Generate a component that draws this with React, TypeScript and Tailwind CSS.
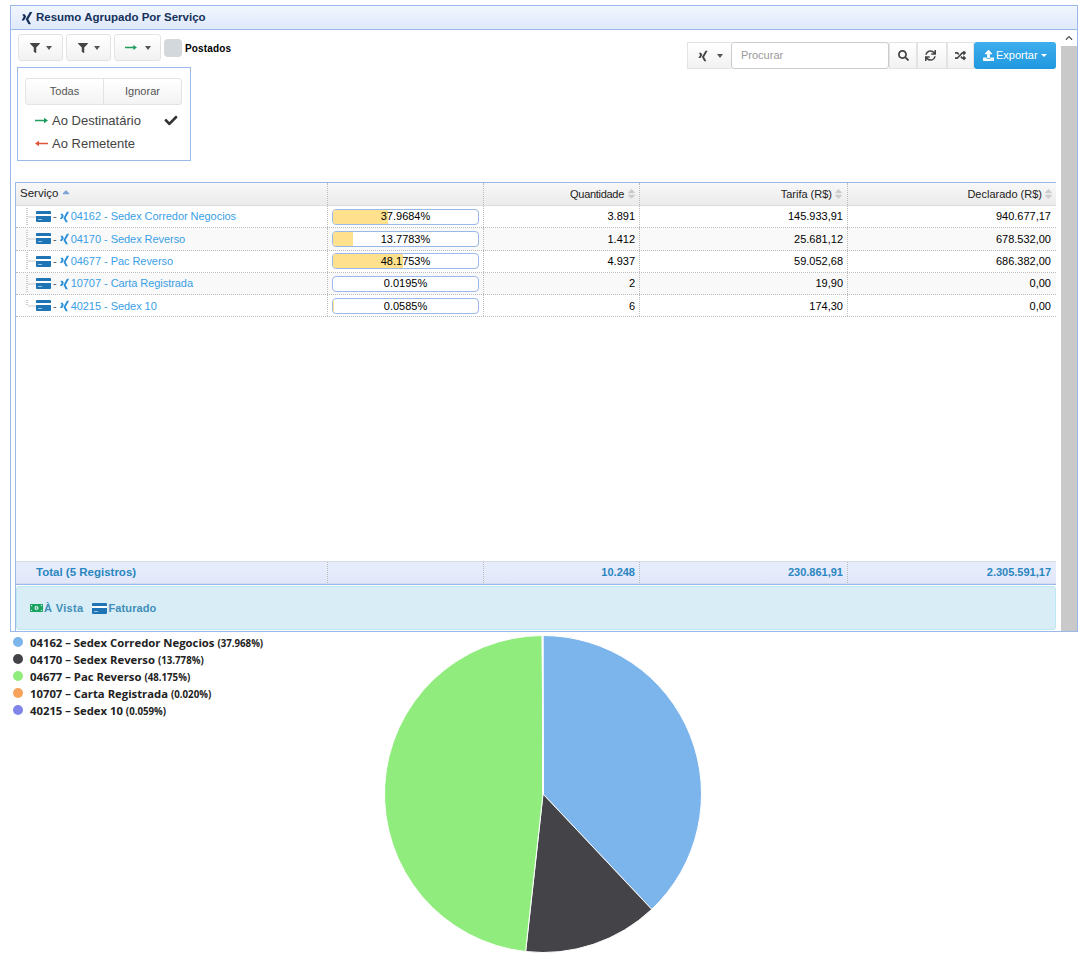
import { FaXing, FaFilter, FaCheck, FaSearch, FaSync, FaRandom, FaUpload, FaMoneyBillAlt, FaSort, FaSortUp, FaChevronUp } from "react-icons/fa";

const rows = [
  { name: "04162 - Sedex Corredor Negocios", pct: 37.9684, qty: "3.891", tarifa: "145.933,91", declarado: "940.677,17" },
  { name: "04170 - Sedex Reverso", pct: 13.7783, qty: "1.412", tarifa: "25.681,12", declarado: "678.532,00" },
  { name: "04677 - Pac Reverso", pct: 48.1753, qty: "4.937", tarifa: "59.052,68", declarado: "686.382,00" },
  { name: "10707 - Carta Registrada", pct: 0.0195, qty: "2", tarifa: "19,90", declarado: "0,00" },
  { name: "40215 - Sedex 10", pct: 0.0585, qty: "6", tarifa: "174,30", declarado: "0,00" },
];

const legend = [
  { label: "04162 – Sedex Corredor Negocios", pct: "37.968%", value: 37.9684, color: "#7cb5ec" },
  { label: "04170 – Sedex Reverso", pct: "13.778%", value: 13.7783, color: "#434348" },
  { label: "04677 – Pac Reverso", pct: "48.175%", value: 48.1753, color: "#90ed7d" },
  { label: "10707 – Carta Registrada", pct: "0.020%", value: 0.0195, color: "#f7a35c" },
  { label: "40215 – Sedex 10", pct: "0.059%", value: 0.0585, color: "#8085e9" },
];

const grid = "grid grid-cols-[312px_156px_156px_208px_1fr]";

function Card({ className = "" }: { className?: string }) {
  return (
    <svg viewBox="0 0 15 11" className={`w-[15px] h-[11px] shrink-0 ${className}`}>
      <rect x="0" y="0" width="15" height="11" rx="1" fill="#1f74b5" />
      <rect x="0" y="3" width="15" height="2" fill="#fff" />
      <rect x="2" y="8" width="4" height="1" fill="#9cc5e4" />
    </svg>
  );
}

function Arrow({ left, className = "" }: { left?: boolean; className?: string }) {
  return (
    <svg viewBox="0 0 13 7" className={`shrink-0 ${className}`}>
      <path d={left ? "M13 2.8H4V0.8L0 3.5l4 2.7V4.2h9z" : "M0 2.8h9V0.8l4 2.7-4 2.7V4.2H0z"} fill="currentColor" />
    </svg>
  );
}

function Caret() {
  return <span className="inline-block w-0 h-0 border-x-[3.5px] border-x-transparent border-t-[4px] border-t-[#555]" />;
}

function TreeLine({ last }: { last: boolean }) {
  return (
    <svg width="16" height="22" className="shrink-0">
      <line x1="7" y1={last ? 5 : 2} x2="7" y2={last ? 11 : 20} stroke="#ccc" strokeWidth="2" strokeDasharray="1 1" />
      <line x1="8" y1="11" x2="16" y2="11" stroke="#ccc" />
    </svg>
  );
}

function Pie() {
  const r = 158.5;
  const c = 159;
  let start = 0;
  const slices = legend.map((s) => {
    const a0 = (start / 100) * Math.PI * 2;
    start += s.value;
    const a1 = (start / 100) * Math.PI * 2;
    const large = a1 - a0 > Math.PI ? 1 : 0;
    const d = `M${c} ${c}L${c + r * Math.sin(a0)} ${c - r * Math.cos(a0)}A${r} ${r} 0 ${large} 1 ${c + r * Math.sin(a1)} ${c - r * Math.cos(a1)}Z`;
    return <path key={s.label} d={d} fill={s.color} stroke="#fff" strokeWidth="1" />;
  });
  return (
    <svg width="318" height="318" className="shrink-0">
      {slices}
    </svg>
  );
}

const toolBtn = "h-[27px] flex items-center justify-center border border-[#e3e3e3] bg-gradient-to-b from-white to-[#f2f2f2] text-[#444]";

export default function App() {
  return (
    <div className="w-[1085px] h-[961px] overflow-hidden bg-white text-[11px] text-black" style={{ fontFamily: '"Liberation Sans", Arial, sans-serif' }}>
      <div className="pt-[5px] pl-[10px]">
        <div className="w-[1068px] h-[627px] border border-[#9ab8e8] flex flex-col">
          <div className="h-[24px] shrink-0 flex items-center gap-[2px] pl-[9px] border-b border-[#9ab8e8] bg-gradient-to-b from-[#f1f6fe] to-[#dfe9fb] text-[#15315a] text-[11.5px] font-bold">
            <FaXing className="w-[14px] h-[14px] text-[#15315a]" />
            <span>Resumo Agrupado Por Serviço</span>
          </div>
          <div className="flex flex-1 min-h-0">
            <div className="w-[1050px] pl-[4px] flex flex-col">
              <div className="relative h-[152px] shrink-0">
                <div className="flex items-start justify-between pl-[3px] pr-[5px]">
                  <div className="flex items-center gap-[3px] pt-[4px]">
                    <button className={`${toolBtn} w-[45px] gap-[6px] rounded-[3px]`}><FaFilter className="w-[10px] h-[10px]" /><Caret /></button>
                    <button className={`${toolBtn} w-[45px] gap-[6px] rounded-[3px]`}><FaFilter className="w-[10px] h-[10px]" /><Caret /></button>
                    <button className={`${toolBtn} w-[47px] gap-[8px] rounded-[3px]`}><Arrow className="w-[12px] h-[7px] text-[#1e9e5c]" /><Caret /></button>
                    <span className="w-[18px] h-[18px] rounded-[4px] bg-[#d3d8dc]" />
                    <span className="text-[10px] font-bold tracking-[0.15px] mt-[2px]">Postados</span>
                  </div>
                  <div className="flex items-center pt-[12px]">
                    <button className={`${toolBtn} w-[44px] gap-[8px] border-r-0`}><FaXing className="w-[12px] h-[12px]" /><Caret /></button>
                    <div className="w-[158px] h-[27px] border border-[#ccc] rounded-[3px] flex items-center pl-[9px] text-[#999]">Procurar</div>
                    <button className={`${toolBtn} w-[28px]`}><FaSearch className="w-[11px] h-[11px]" /></button>
                    <button className={`${toolBtn} w-[30px] pr-[3px]`}><FaSync className="w-[11px] h-[11px]" /></button>
                    <button className={`${toolBtn} w-[27px]`}><FaRandom className="w-[11px] h-[11px]" /></button>
                    <button className="h-[27px] w-[82px] flex items-center pl-[9px] gap-[2px] rounded-[3px] bg-gradient-to-b from-[#3eaeec] to-[#1e98e0] text-white">
                      <FaUpload className="w-[11px] h-[11px]" />
                      Exportar
                      <span className="ml-[1px] inline-block w-0 h-0 border-x-[3px] border-x-transparent border-t-[3px] border-t-white" />
                    </button>
                  </div>
                </div>
                <div className="absolute left-[2px] top-[37px] w-[174px] h-[94px] border border-[#9ab8e8] bg-white px-[7px] pt-[10px]">
                  <div className="flex h-[27px] w-[157px] border border-[#e3e3e3] rounded-[3px] bg-gradient-to-b from-white to-[#f3f3f3] text-[#555]">
                    <div className="w-[78px] flex items-center justify-center border-r border-[#e3e3e3]">Todas</div>
                    <div className="flex-1 flex items-center justify-center">Ignorar</div>
                  </div>
                  <div className="mt-[4px] h-[23px] flex items-center pl-[10px] gap-[4px] text-[#444] text-[13px]">
                    <Arrow className="w-[13px] h-[7px] text-[#1e9e5c]" />
                    <span>Ao Destinatário</span>
                    <FaCheck className="w-[14px] h-[13px] ml-[19px] text-[#333]" />
                  </div>
                  <div className="h-[23px] flex items-center pl-[10px] gap-[4px] text-[#444] text-[13px]">
                    <Arrow left className="w-[13px] h-[7px] text-[#e2553d]" />
                    <span>Ao Remetente</span>
                  </div>
                </div>
              </div>

              <div className="w-[1041px] flex-1 min-h-0 border-l border-t border-[#9ab8e8] flex flex-col">
                <div className={`${grid} h-[23px] shrink-0 bg-gradient-to-b from-[#f8f8f8] to-[#ebebeb] border-b border-[#dcdcdc] text-[#222]`}>
                  <div className="flex items-center gap-[3px] pl-[4px] border-r border-dotted border-[#bbb] text-[11.5px]">Serviço <FaSortUp className="w-[10px] h-[12px] mt-[1px] text-[#7fa6d6]" /></div>
                  <div className="border-r border-dotted border-[#bbb]" />
                  <div className="flex items-center justify-end gap-[3px] pr-[3px] border-r border-dotted border-[#bbb] tracking-[-0.3px]">Quantidade <FaSort className="w-[9px] h-[12px] text-[#ccc]" /></div>
                  <div className="flex items-center justify-end gap-[2px] pr-[4px] border-r border-dotted border-[#bbb]">Tarifa (R$) <FaSort className="w-[9px] h-[12px] text-[#ccc]" /></div>
                  <div className="flex items-center justify-end gap-[2px] pr-[3px]">Declarado (R$) <FaSort className="w-[9px] h-[12px] text-[#ccc]" /></div>
                </div>
                <div className="flex-1 min-h-0">
                  {rows.map((r, i) => (
                    <div key={r.name} className={`${grid} h-[22.3px] border-b border-dotted border-[#bbb] ${i % 2 ? "bg-[#f9f9f9]" : "bg-white"}`}>
                      <div className="flex items-center pl-[4px] border-r border-dotted border-[#bbb] text-[#3aa0e6] overflow-hidden">
                        <TreeLine last={i === rows.length - 1} />
                        <Card />
                        <span className="text-[#555] mx-[2px]">-</span>
                        <FaXing className="w-[11px] h-[12px] mr-[1px] text-[#2a8fd8]" />
                        <span className="tracking-[-0.05px]">{r.name}</span>
                      </div>
                      <div className="flex items-center px-[4px] border-r border-dotted border-[#bbb]">
                        <div className="relative w-[147px] h-[16px] border border-[#9ab8e8] rounded-[4px] bg-white overflow-hidden flex items-center justify-center">
                          <div className="absolute left-0 top-0 bottom-0 bg-[#ffe08c]" style={{ width: `${r.pct}%` }} />
                          <span className="relative">{r.pct.toFixed(4)}%</span>
                        </div>
                      </div>
                      <div className="flex items-center justify-end pr-[4px] border-r border-dotted border-[#bbb]">{r.qty}</div>
                      <div className="flex items-center justify-end pr-[4px] border-r border-dotted border-[#bbb]">{r.tarifa}</div>
                      <div className="flex items-center justify-end pr-[5px]">{r.declarado}</div>
                    </div>
                  ))}
                </div>
                <div className={`${grid} h-[23px] shrink-0 border-y border-[#d5dbe8] bg-gradient-to-b from-[#e8edfc] to-[#e2e8fa] text-[#2a86c0] font-bold`}>
                  <div className="flex items-center pl-[20px] border-r border-dotted border-[#bbb] text-[11.5px]">Total (5 Registros)</div>
                  <div className="border-r border-dotted border-[#bbb]" />
                  <div className="flex items-center justify-end pr-[4px] border-r border-dotted border-[#bbb]">10.248</div>
                  <div className="flex items-center justify-end pr-[4px] border-r border-dotted border-[#bbb]">230.861,91</div>
                  <div className="flex items-center justify-end pr-[5px]">2.305.591,17</div>
                </div>
                <div className="h-px bg-[#9ab8e8] shrink-0" />
                <div className="h-[44px] shrink-0 mt-[1px] mb-[1px] flex items-center pl-[13px] border border-[#bce8f1] rounded-[3px] bg-[#d9edf7] text-[#3f8fb8] font-bold tracking-[0.1px]">
                  <FaMoneyBillAlt className="w-[13px] h-[14px] text-[#1aa35c]" />
                  <span className="ml-[1px] tracking-[0.35px]">À Vista</span>
                  <Card className="ml-[8px] mr-[2px]" />
                  <span>Faturado</span>
                </div>
              </div>
            </div>
            <div className="w-[16px] shrink-0 flex flex-col">
              <div className="h-[16px] flex items-center justify-center"><FaChevronUp className="w-[8px] h-[8px] text-[#555]" /></div>
              <div className="flex-1 bg-[#c9c9c9]" />
            </div>
          </div>
        </div>
      </div>
      <div className="flex">
        <div className="w-[384px] shrink-0 pl-[13px] pt-[3px] text-[#222]" style={{ fontFamily: '"Open Sans", Verdana, sans-serif' }}>
          {legend.map((l) => (
            <div key={l.label} className="h-[17px] flex items-center gap-[7px] whitespace-nowrap">
              <span className="w-[10px] h-[10px] rounded-full -mt-[4px]" style={{ backgroundColor: l.color }} />
              <span className="text-[11.3px] font-bold">{l.label} <span className="text-[9.7px]">({l.pct})</span></span>
            </div>
          ))}
        </div>
        <div className="pt-[3px]"><Pie /></div>
      </div>
    </div>
  );
}
